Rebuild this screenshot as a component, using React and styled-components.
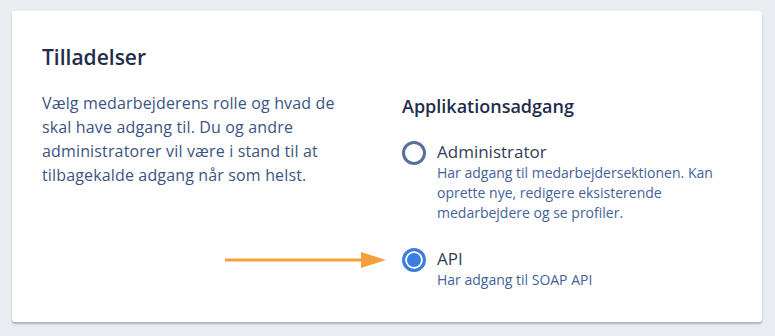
import React, { useState } from 'react'
import styled, { createGlobalStyle } from 'styled-components'

const GlobalStyle = createGlobalStyle`
  html, body {
    margin: 0;
    padding: 0;
    background: #e9ecf1;
  }
  body {
    font-family: "Open Sans", "Noto Sans", sans-serif;
  }
`

const Page = styled.div`
  padding: 11px 13px 14px 12px;
`

const Card = styled.section`
  background: #fff;
  border-radius: 3px;
  box-shadow: 0 2px 2px rgba(60, 70, 90, 0.35);
  padding: 32px 30px 30px 30px;
  height: 311px;
  box-sizing: border-box;
`

const Title = styled.h2`
  margin: 0 0 20px;
  font-size: 21px;
  font-weight: 600;
  color: #1f2d4d;
  line-height: 28px;
`

const Columns = styled.div`
  display: grid;
  grid-template-columns: 360px 1fr;
`

const Intro = styled.p`
  margin: 0;
  font-size: 16px;
  line-height: 24px;
  color: #3b5482;
  width: 320px;
  letter-spacing: 0.15px;
`

const Side = styled.div`
  display: flex;
  flex-direction: column;
`

const SubTitle = styled.h3`
  margin: 2px 0 22px;
  font-size: 18px;
  font-weight: 600;
  color: #1f2d4d;
  line-height: 26px;
`

const Option = styled.label`
  display: flex;
  gap: 11px;
  margin-bottom: ${p => p.$gap || 0}px;
  cursor: pointer;
  position: relative;
`

const Radio = styled.span`
  flex: none;
  width: 24px;
  height: 24px;
  box-sizing: border-box;
  border-radius: 50%;
  border: 3px solid ${p => (p.$checked ? '#3b7de0' : '#58709b')};
  background: ${p => (p.$checked ? '#3b7de0' : '#fff')};
  box-shadow: ${p => (p.$checked ? 'inset 0 0 0 2px #fff' : 'none')};
`

const Body = styled.div`
  display: flex;
  flex-direction: column;
`

const Label = styled.span`
  font-size: 17px;
  line-height: 22px;
  color: #344055;
`

const Desc = styled.span`
  font-size: 14px;
  line-height: 20px;
  color: #43629a;
  width: 300px;
`

const Arrow = styled.svg`
  position: absolute;
  left: -177px;
  top: 1px;
`

const options = [
  {
    id: 'admin',
    label: 'Administrator',
    desc: 'Har adgang til medarbejdersektionen. Kan oprette nye, redigere eksisterende medarbejdere og se profiler.',
  },
  { id: 'api', label: 'API', desc: 'Har adgang til SOAP API' },
]

export default function App() {
  const [value, setValue] = useState('api')
  return (
    <Page>
      <GlobalStyle />
      <Card>
        <Title>Tilladelser</Title>
        <Columns>
          <Intro>
            Vælg medarbejderens rolle og hvad de skal have adgang til. Du og andre administratorer vil være i stand til at
            tilbagekalde adgang når som helst.
          </Intro>
          <Side>
            <SubTitle>Applikationsadgang</SubTitle>
            {options.map((o, i) => (
              <Option key={o.id} $gap={i === 0 ? 25 : 0} onClick={() => setValue(o.id)}>
                {o.id === 'api' && (
                  <Arrow width="162" height="22" viewBox="0 0 162 22">
                    <line x1="0" y1="11" x2="138" y2="11" stroke="#f5a03a" strokeWidth="3" />
                    <polygon points="136,3 161,11 136,19" fill="#f5a03a" />
                  </Arrow>
                )}
                <Radio $checked={value === o.id} />
                <Body>
                  <Label>{o.label}</Label>
                  <Desc>{o.desc}</Desc>
                </Body>
              </Option>
            ))}
          </Side>
        </Columns>
      </Card>
    </Page>
  )
}
